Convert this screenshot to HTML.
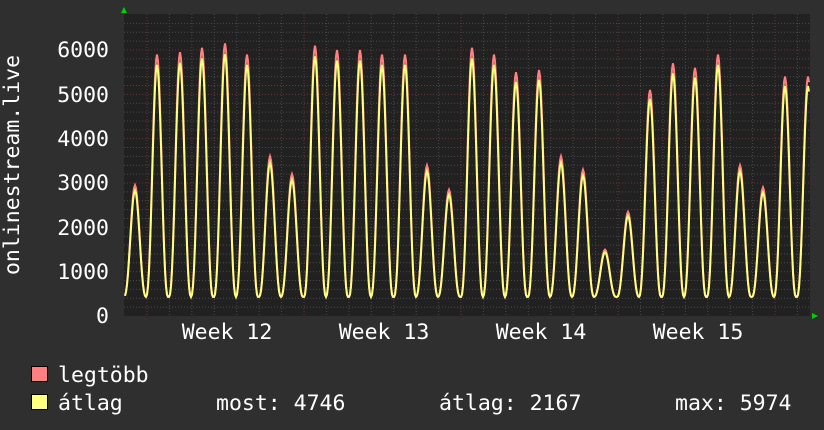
<!DOCTYPE html>
<html><head><meta charset="utf-8"><style>
html,body{margin:0;padding:0;background:#2f2f2f;width:824px;height:430px;overflow:hidden}
svg{display:block}
text{font-family:"DejaVu Sans Mono","Liberation Mono",monospace;fill:#fff}
</style></head><body>
<svg id="s" width="824" height="430" xmlns="http://www.w3.org/2000/svg">
<rect x="0" y="0" width="824" height="430" fill="#2f2f2f"/>
<rect x="124" y="14" width="686" height="302" fill="#212121"/>
<g id="grid"></g>
<g id="data"></g>
<polygon points="121,13 127,13 124,7" fill="#00d000"/>
<polygon points="812,313 812,319 818,316" fill="#00d000"/>
<g font-size="21.5" text-anchor="end">
<text x="109" y="57">6000</text>
<text x="109" y="102">5000</text>
<text x="109" y="146">4000</text>
<text x="109" y="190">3000</text>
<text x="109" y="235">2000</text>
<text x="109" y="279">1000</text>
<text x="109" y="323">0</text>
</g>
<text x="19" y="165" font-size="21.5" text-anchor="middle" transform="rotate(-90 19 165)">onlinestream.live</text>
<g font-size="21.5" text-anchor="middle">
<text x="227" y="339">Week 12</text>
<text x="384" y="339">Week 13</text>
<text x="541" y="339">Week 14</text>
<text x="698" y="339">Week 15</text>
</g>
<rect x="31.5" y="366.5" width="16" height="15" fill="#ff8080" stroke="#000"/>
<rect x="31.5" y="394.5" width="16" height="15" fill="#ffff80" stroke="#000"/>
<g font-size="21.5">
<text x="58" y="382">legtöbb</text>
<text x="58" y="410">átlag</text>
<text x="216" y="410">most: 4746</text>
<text x="439" y="410">átlag: 2167</text>
<text x="675" y="410">max: 5974</text>
</g>
</svg>
<script>
var ns="http://www.w3.org/2000/svg";
function el(p,t,a){var e=document.createElementNS(ns,t);for(var k in a)e.setAttribute(k,a[k]);p.appendChild(e);return e;}
var g=document.getElementById('grid');
function Y(v){return 316-v*0.04433;}
for(var v=200;v<=6600;v+=200){var y=Y(v);if(y<14)break;var major=(v%1000==0);
el(g,'line',{x1:124,x2:810,y1:y,y2:y,stroke:major?'#6a3434':'#4a4a4a','stroke-dasharray':'1,2','stroke-width':1});}
for(var x=147-22.43;x<810;x+=22.43){if(x<125)continue;var wk=Math.abs(((x-147)/156.99)-Math.round((x-147)/156.99))<0.01;
el(g,'line',{x1:x,x2:x,y1:14,y2:316,stroke:wk?'#6a3434':'#4a4a4a','stroke-dasharray':'1,2'});}
var peaks=[[135,2950],[157,5900],[180,5950],[202,6050],[225,6150],[247,5900],[270,3600],[292,3200],[315,6100],[337,6000],[360,6000],[382,5900],[405,5900],[427,3400],[449,2850],[472,6050],[494,5900],[516,5500],[539,5550],[561,3600],[583,3300],[605,1500],[628,2350],[650,5100],[673,5700],[695,5600],[718,5900],[740,3400],[763,2900],[785,5400],[808,5400]];
function val(x,f){for(var i=0;i<peaks.length;i++){var d=(x-peaks[i][0])/22.43;if(Math.abs(d)>0.5)continue;
var s=Math.pow((1+Math.cos(2*Math.PI*d))/2,1.3);var base=430;return base+(peaks[i][1]*f-base)*s;}return 430;}
var dg=document.getElementById('data');
var pm="",pa="";
for(var x=125;x<=809;x+=1){var m=val(x,1),a=val(x,0.96);
pm+=(x==125?"M":"L")+x+","+Y(m).toFixed(1);pa+=(x==125?"M":"L")+x+","+Y(a).toFixed(1);}
el(dg,'path',{d:pm,fill:'none',stroke:'#ff8080','stroke-width':2});
el(dg,'path',{d:pa,fill:'none',stroke:'#ffff80','stroke-width':2});
</script>
</body></html>
